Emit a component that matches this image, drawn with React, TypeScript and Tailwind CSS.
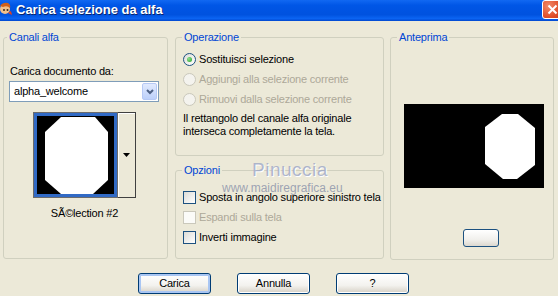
import React from "react";

// Windows XP style dialog: "Carica selezione da alfa"

function Radio({ checked, disabled }: { checked?: boolean; disabled?: boolean }) {
  return (
    <span
      className={`relative flex h-[13px] w-[13px] shrink-0 items-center justify-center rounded-full border ${
        disabled
          ? "border-[#CAC8BB] bg-[#F4F3EE]"
          : "border-[#1C5180] bg-[linear-gradient(135deg,#DCDCD7,#ffffff)]"
      }`}
    >
      {checked && (
        <span className="h-[5px] w-[5px] rounded-full bg-[radial-gradient(circle_at_35%_35%,#8EE08E,#21A121)]" />
      )}
    </span>
  );
}

function Check({ disabled }: { disabled?: boolean }) {
  return (
    <span
      className={`h-[13px] w-[13px] shrink-0 border ${
        disabled
          ? "border-[#CAC8BB] bg-[#FBFBF8]"
          : "border-[#1C5180] bg-[linear-gradient(135deg,#DCDCD7,#ffffff)]"
      }`}
    />
  );
}

function XpButton({ label, isDefault }: { label: string; isDefault?: boolean }) {
  return (
    <button
      className={`flex h-[21px] w-[73px] items-center justify-center rounded-[3px] border border-[#003C74] bg-[linear-gradient(to_bottom,#FFFFFF,#F3F2EE_60%,#D6D0C5)] text-[11px] text-black ${
        isDefault ? "shadow-[inset_0_0_0_2px_#A9C6F3]" : "shadow-[inset_0_0_0_1px_#FFFFFF]"
      }`}
    >
      {label}
    </button>
  );
}

export default function App() {
  return (
    <div className="relative h-[296px] w-[558px] overflow-hidden bg-[#ECE9D8] font-['Liberation_Sans',Arial,sans-serif] text-[11px] tracking-[-0.2px] text-black">
      {/* Title bar */}
      <div className="flex h-[21px] items-start bg-[linear-gradient(to_bottom,#1168F2_0%,#0056E6_25%,#0052DF_70%,#0B64F2_88%,#0047CF_100%)]">
        <svg className="mt-[2px] shrink-0" width="13" height="14" viewBox="0 0 13 14">
          <circle cx="5" cy="7" r="5" fill="#F2C08A" />
          <path d="M0 4 Q3 0 8 1 Q11 3 10 6 Q7 3 3 5 Z" fill="#D0601A" />
          <circle cx="4" cy="8" r="1" fill="#3A2A1A" />
          <circle cx="7.5" cy="8" r="1" fill="#3A2A1A" />
          <path d="M8 11 L12 13 L11 9 Z" fill="#E04020" />
        </svg>
        <span className="ml-[3px] mt-[2px] text-[13px] font-bold leading-[15px] tracking-normal text-white [text-shadow:1px_1px_0_#0A246A]">
          Carica selezione da alfa
        </span>
        <div className="ml-auto mr-[-5px] flex h-[19px] w-[21px] shrink-0 items-center justify-center rounded-[3px] border border-white bg-[radial-gradient(circle_at_30%_30%,#F08A6A,#E0502A_60%,#C43A16)]">
          <svg width="11" height="11" viewBox="0 0 11 11">
            <path d="M1.5 1.5 L9.5 9.5 M9.5 1.5 L1.5 9.5" stroke="white" strokeWidth="2" />
          </svg>
        </div>
      </div>

      {/* Main area */}
      <div className="flex h-[238px] pl-[3px] pt-[9px]">
        {/* Canali alfa */}
        <fieldset className="h-[229px] w-[165px] shrink-0 rounded-[3px] border border-[#D0D0BF] p-0">
          <legend className="ml-[3px] px-[2px] leading-[14px] text-[#0046D5]">Canali alfa</legend>
          <div className="flex flex-col">
            <span className="ml-[6px] mt-[20px] leading-[14px]">Carica documento da:</span>
            <div className="ml-[5px] mt-[3px] flex h-[21px] w-[150px] items-center border border-[#7F9DB9] bg-white">
              <span className="ml-[4px] flex-1">alpha_welcome</span>
              <div className="mr-[1px] flex h-[17px] w-[15px] items-center justify-center rounded-[2px] border border-[#B6C9F5] bg-[linear-gradient(to_bottom,#E1EAFE,#BCD0FA)]">
                <svg width="8" height="6" viewBox="0 0 8 6">
                  <path d="M1 1 L4 4 L7 1" stroke="#4D6185" strokeWidth="2" fill="none" />
                </svg>
              </div>
            </div>
            <div className="ml-[29px] mt-[10px] flex w-[103px] flex-col items-center">
              <div className="flex h-[86px]">
                <div className="h-[86px] w-[85px] border border-[#6B6B6B] bg-white">
                  <div className="h-full w-full border-[3px] border-[#316AC5] bg-black">
                    <svg width="77" height="78" viewBox="0 0 77 78">
                      <polygon points="24,1 58,1 71,16 71,64 56,78 24,78 8,64 8,16" fill="white" />
                    </svg>
                  </div>
                </div>
                <div className="flex h-[86px] w-[18px] items-center justify-center border-y border-r border-y-[#404040] border-r-[#404040] bg-[#ECE9D8] shadow-[inset_1px_1px_0_#FFFFFF]">
                  <svg width="7" height="4" viewBox="0 0 7 4">
                    <polygon points="0,0 7,0 3.5,4" fill="black" />
                  </svg>
                </div>
              </div>
              <span className="mt-[8px] leading-[14px]">SÃ©lection #2</span>
            </div>
          </div>
        </fieldset>

        {/* Middle column */}
        <div className="ml-[7px] flex w-[209px] shrink-0 flex-col">
          <fieldset className="h-[126px] rounded-[3px] border border-[#D0D0BF] p-0">
            <legend className="ml-[6px] px-[2px] leading-[14px] text-[#0046D5]">Operazione</legend>
            <div className="mt-[5px] flex flex-col">
              <div className="ml-[7px] flex h-[20px] items-center gap-[3px]">
                <Radio checked />
                <span>Sostituisci selezione</span>
              </div>
              <div className="ml-[7px] flex h-[20px] items-center gap-[3px] text-[#ACA899]">
                <Radio disabled />
                <span>Aggiungi alla selezione corrente</span>
              </div>
              <div className="ml-[7px] flex h-[20px] items-center gap-[3px] text-[#ACA899]">
                <Radio disabled />
                <span>Rimuovi dalla selezione corrente</span>
              </div>
              <p className="ml-[7px] mt-[3px] leading-[13px]">
                Il rettangolo del canale alfa originale
                <br />
                interseca completamente la tela.
              </p>
            </div>
          </fieldset>

          <fieldset className="mt-[7px] h-[96px] rounded-[3px] border border-[#D0D0BF] p-0">
            <legend className="ml-[6px] px-[2px] leading-[14px] text-[#0046D5]">Opzioni</legend>
            <div className="mt-[10px] flex flex-col">
              <div className="ml-[7px] flex h-[20px] items-center gap-[3px] whitespace-nowrap">
                <Check />
                <span>Sposta in angolo superiore sinistro tela</span>
              </div>
              <div className="ml-[7px] flex h-[20px] items-center gap-[3px] text-[#ACA899]">
                <Check disabled />
                <span>Espandi sulla tela</span>
              </div>
              <div className="ml-[7px] flex h-[20px] items-center gap-[3px]">
                <Check />
                <span>Inverti immagine</span>
              </div>
            </div>
          </fieldset>
        </div>

        {/* Anteprima */}
        <fieldset className="ml-[6px] h-[230px] w-[164px] shrink-0 rounded-[3px] border border-[#D0D0BF] p-0">
          <legend className="ml-[6px] px-[2px] leading-[14px] text-[#0046D5]">Anteprima</legend>
          <div className="flex flex-col">
            <div className="ml-[13px] mt-[60px] h-[84px] w-[140px] bg-black">
              <svg width="140" height="84" viewBox="0 0 140 84">
                <polygon points="98,10 114,10 131,24 131,61 113,75 99,75 81,60 81,23" fill="white" />
              </svg>
            </div>
            <div className="ml-[72px] mt-[41px] h-[18px] w-[36px] rounded-[3px] border border-[#1C5180] bg-[linear-gradient(to_bottom,#FFFFFF,#F1F0EC_60%,#DCD8CF)]" />
          </div>
        </fieldset>
      </div>

      {/* Buttons */}
      <div className="ml-[138px] mt-[14px] flex gap-[26px]">
        <XpButton label="Carica" isDefault />
        <XpButton label="Annulla" />
        <XpButton label="?" />
      </div>

      {/* Watermark */}
      <span className="pointer-events-none absolute left-[252px] top-[160px] text-[19px] leading-none tracking-[0.5px] text-[#9CA6C4]/80 [text-shadow:1px_1px_0_#ffffff]">
        Pinuccia
      </span>
      <span className="pointer-events-none absolute left-[222px] top-[182px] text-[12px] leading-none tracking-normal text-[#8890A8]/80">
        www.maidiregrafica.eu
      </span>
    </div>
  );
}
